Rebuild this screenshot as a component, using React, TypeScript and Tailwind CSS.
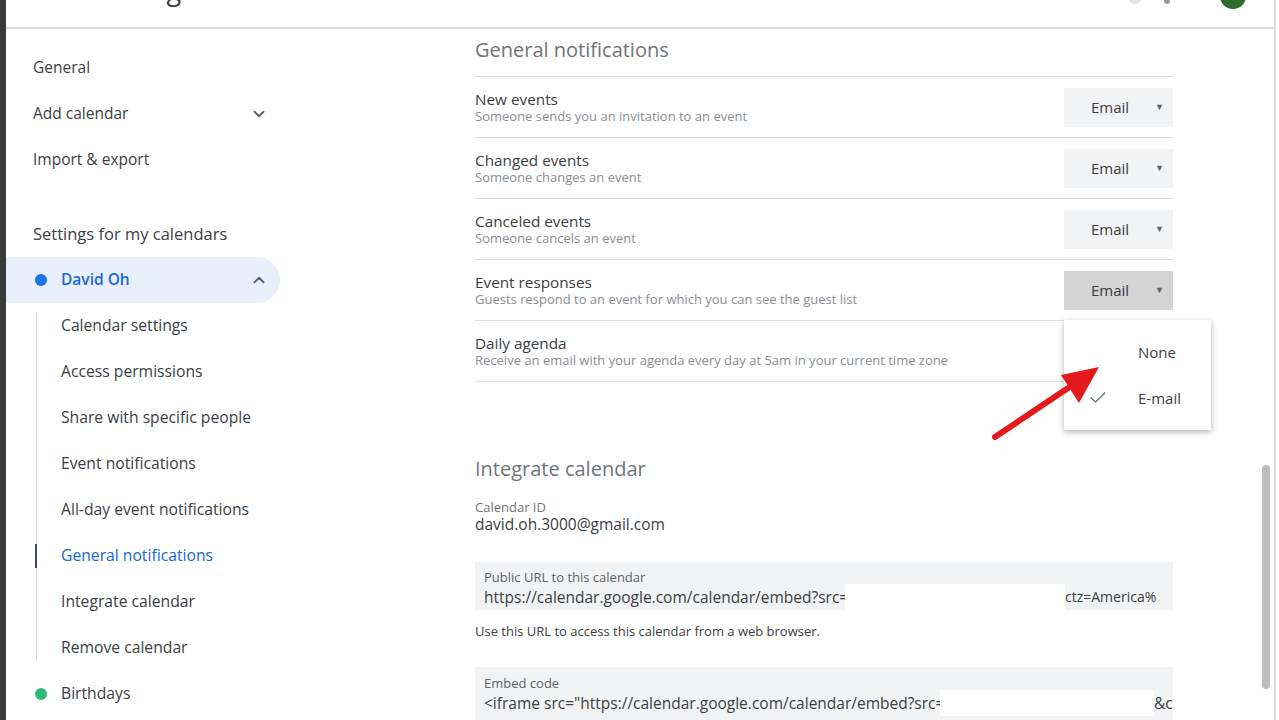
import { ChevronDown, ChevronUp, Check } from "lucide-react";

const font = { fontFamily: '"Open Sans", Roboto, sans-serif' };

const topItems = ["General", "Add calendar", "Import & export"];

const subItems = [
  "Calendar settings",
  "Access permissions",
  "Share with specific people",
  "Event notifications",
  "All-day event notifications",
  "General notifications",
  "Integrate calendar",
  "Remove calendar",
];

const notificationRows = [
  { title: "New events", sub: "Someone sends you an invitation to an event", value: "Email" },
  { title: "Changed events", sub: "Someone changes an event", value: "Email" },
  { title: "Canceled events", sub: "Someone cancels an event", value: "Email" },
  {
    title: "Event responses",
    sub: "Guests respond to an event for which you can see the guest list",
    value: "Email",
    pressed: true,
  },
  { title: "Daily agenda", sub: "Receive an email with your agenda every day at 5am in your current time zone" },
];

const Sidebar = function () {
  return (
    <div className="flex w-[274px] shrink-0 flex-col pt-[16px]">
      {topItems.map((item) => (
        <div
          key={item}
          className="flex h-[46px] items-center justify-between pl-[27px] pr-[12px] text-[15.5px] text-[#3c4043]"
        >
          <span>{item}</span>
          {item === "Add calendar" && <ChevronDown className="size-[18px] text-[#5f6368]" strokeWidth={2.5} />}
        </div>
      ))}
      <div className="mt-[28px] flex h-[46px] items-center pl-[27px] text-[16.5px] font-medium text-[#3c4043]">
        Settings for my calendars
      </div>
      <div className="flex h-[46px] items-center justify-between rounded-r-full bg-[#e8f0fe] pl-[29px] pr-[12px]">
        <div className="flex items-center gap-[14px]">
          <span className="size-[12px] rounded-full bg-[#1a73e8]" />
          <span className="text-[15.5px] font-semibold text-[#1967d2]">David Oh</span>
        </div>
        <ChevronUp className="size-[18px] text-[#5f6368]" strokeWidth={2.5} />
      </div>
      <div className="relative flex flex-col">
        <div className="absolute left-[30px] top-[9px] h-[348px] w-px bg-[#dadce0]" />
        {subItems.map((item) => {
          const active = item === "General notifications";
          return (
            <div key={item} className="relative flex h-[46px] items-center pl-[55px] text-[15.7px]">
              {active && <div className="absolute left-[29px] top-[11px] h-[24px] w-[2px] bg-[#3c4a6b]" />}
              <span className={active ? "text-[#1967d2]" : "text-[#3c4043]"}>{item}</span>
            </div>
          );
        })}
        <div className="flex h-[46px] items-center gap-[14px] pl-[29px]">
          <span className="size-[12px] rounded-full bg-[#33b679]" />
          <span className="text-[15.7px] text-[#3c4043]">Birthdays</span>
        </div>
      </div>
    </div>
  );
};

const SelectButton = function ({ value, pressed }: { value: string; pressed?: boolean }) {
  return (
    <div
      className={`flex h-[39px] w-[109px] items-center justify-between pl-[27px] pr-[9px] text-[15px] text-[#3c4043] ${
        pressed ? "bg-[#d4d4d4]" : "bg-[#f1f3f4]"
      }`}
    >
      <span>{value}</span>
      <span className="text-[9px] text-[#5f6368]">▼</span>
    </div>
  );
};

const NotificationMenu = function () {
  return (
    <div className="absolute left-[589px] top-[243px] z-10 flex h-[110px] w-[147px] flex-col justify-center bg-white shadow-[0_2px_6px_rgba(0,0,0,0.3)]">
      <div className="flex h-[46px] items-center pl-[74px] text-[15px] text-[#3c4043]">None</div>
      <div className="relative flex h-[46px] items-center pl-[74px] text-[15px] text-[#3c4043]">
        <Check className="absolute left-[24px] size-[20px] text-[#5f6368]" strokeWidth={1.5} />
        E-mail
      </div>
    </div>
  );
};

const RedArrow = function () {
  return (
    <svg className="absolute left-[708px] top-[302px] z-20" width="140" height="120" viewBox="0 0 140 120">
      <line x1="7" y1="106" x2="95" y2="47" stroke="#e4191b" strokeWidth="6" strokeLinecap="round" />
      <polygon points="111,36 73,44 91,72" fill="#e4191b" />
    </svg>
  );
};

const Redacted = function ({ w }: { w: string }) {
  return <div className={`h-[26px] shrink-0 bg-white ${w}`} />;
};

const MainContent = function () {
  return (
    <div className="relative flex-1 pl-[195px]">
      <div className="relative w-[698px]">
        <div className="border-b border-[#e0e0e0] pb-[12px] pt-[7px] text-[20px] leading-[28px] text-[#70757a]">
          General notifications
        </div>
        <div className="relative">
          {notificationRows.map((row) => (
            <div key={row.title} className="flex h-[61px] items-center justify-between border-b border-[#e0e0e0]">
              <div className="flex flex-col">
                <span className="text-[15.3px] leading-[18px] text-[#3c4043]">{row.title}</span>
                <span className="whitespace-nowrap text-[13px] leading-[17px] text-[#8a8e93]">{row.sub}</span>
              </div>
              {row.value && <SelectButton pressed={row.pressed} value={row.value} />}
            </div>
          ))}
          <NotificationMenu />
        </div>
        <div className="mt-[73px] text-[20px] leading-[28px] text-[#70757a]">Integrate calendar</div>
        <div className="mt-[16px] flex flex-col">
          <span className="text-[13px] leading-[16px] text-[#70757a]">Calendar ID</span>
          <span className="text-[15.5px] leading-[18px] text-[#3c4043]">david.oh.3000@gmail.com</span>
        </div>
        <div className="mt-[29px] flex h-[48px] flex-col bg-[#f1f3f4] px-[9px] pt-[8px]">
          <span className="text-[13px] leading-[14px] text-[#5f6368]">Public URL to this calendar</span>
          <div className="flex items-center text-[15.5px] leading-[22px] text-[#3c4043]">
            <span className="w-[361px] shrink-0 overflow-hidden whitespace-nowrap">
              https://calendar.google.com/calendar/embed?src=
            </span>
            <Redacted w="w-[220px]" />
            <span className="whitespace-nowrap text-[14px]">ctz=America%</span>
          </div>
        </div>
        <div className="mt-[13px] text-[13px] leading-[16px] text-[#3c4043]">
          Use this URL to access this calendar from a web browser.
        </div>
        <div className="mt-[28px] flex h-[56px] flex-col bg-[#f1f3f4] px-[9px] pt-[9px]">
          <span className="text-[13px] leading-[14px] text-[#5f6368]">Embed code</span>
          <div className="flex items-center text-[15.5px] leading-[22px] text-[#3c4043]">
            <span className="w-[456px] shrink-0 overflow-hidden whitespace-nowrap">
              &lt;iframe src="https://calendar.google.com/calendar/embed?src=
            </span>
            <Redacted w="w-[214px]" />
            <span className="whitespace-nowrap">&amp;c</span>
          </div>
        </div>
      </div>
      <RedArrow />
    </div>
  );
};

export default function App() {
  return (
    <div className="flex h-[720px] w-[1279px] overflow-hidden bg-white" style={font}>
      <div className="w-[6px] shrink-0 bg-[#3a3a3a]" />
      <div className="flex min-w-0 flex-1 flex-col">
        <div className="relative h-[29px] shrink-0 overflow-hidden border-b-2 border-[#dcdcdc]">
          <div className="absolute left-[88px] top-[-27px] text-[27px] leading-[34px] text-[#3c4043]">Settings</div>
          <div className="absolute left-[1122px] top-[-4px] flex gap-[22px]">
            <span className="h-[8px] w-[14px] rounded-b-full bg-[#e4e4e4]" />
            <span className="h-[8px] w-[6px] rounded-b-full bg-[#9a9a9a]" />
          </div>
          <div className="absolute left-[1214px] top-[-17px] size-[26px] rounded-full bg-[#2e6b2a]" />
        </div>
        <div className="flex min-h-0 flex-1">
          <Sidebar />
          <MainContent />
          <div className="flex w-[18px] shrink-0 pl-[6px]">
            <div className="mt-[436px] h-[224px] w-[8px] rounded-full bg-[#bdbdbd]" />
          </div>
        </div>
      </div>
      <div className="w-[5px] shrink-0 border-l-2 border-[#dcdcdc] bg-white" />
    </div>
  );
}
